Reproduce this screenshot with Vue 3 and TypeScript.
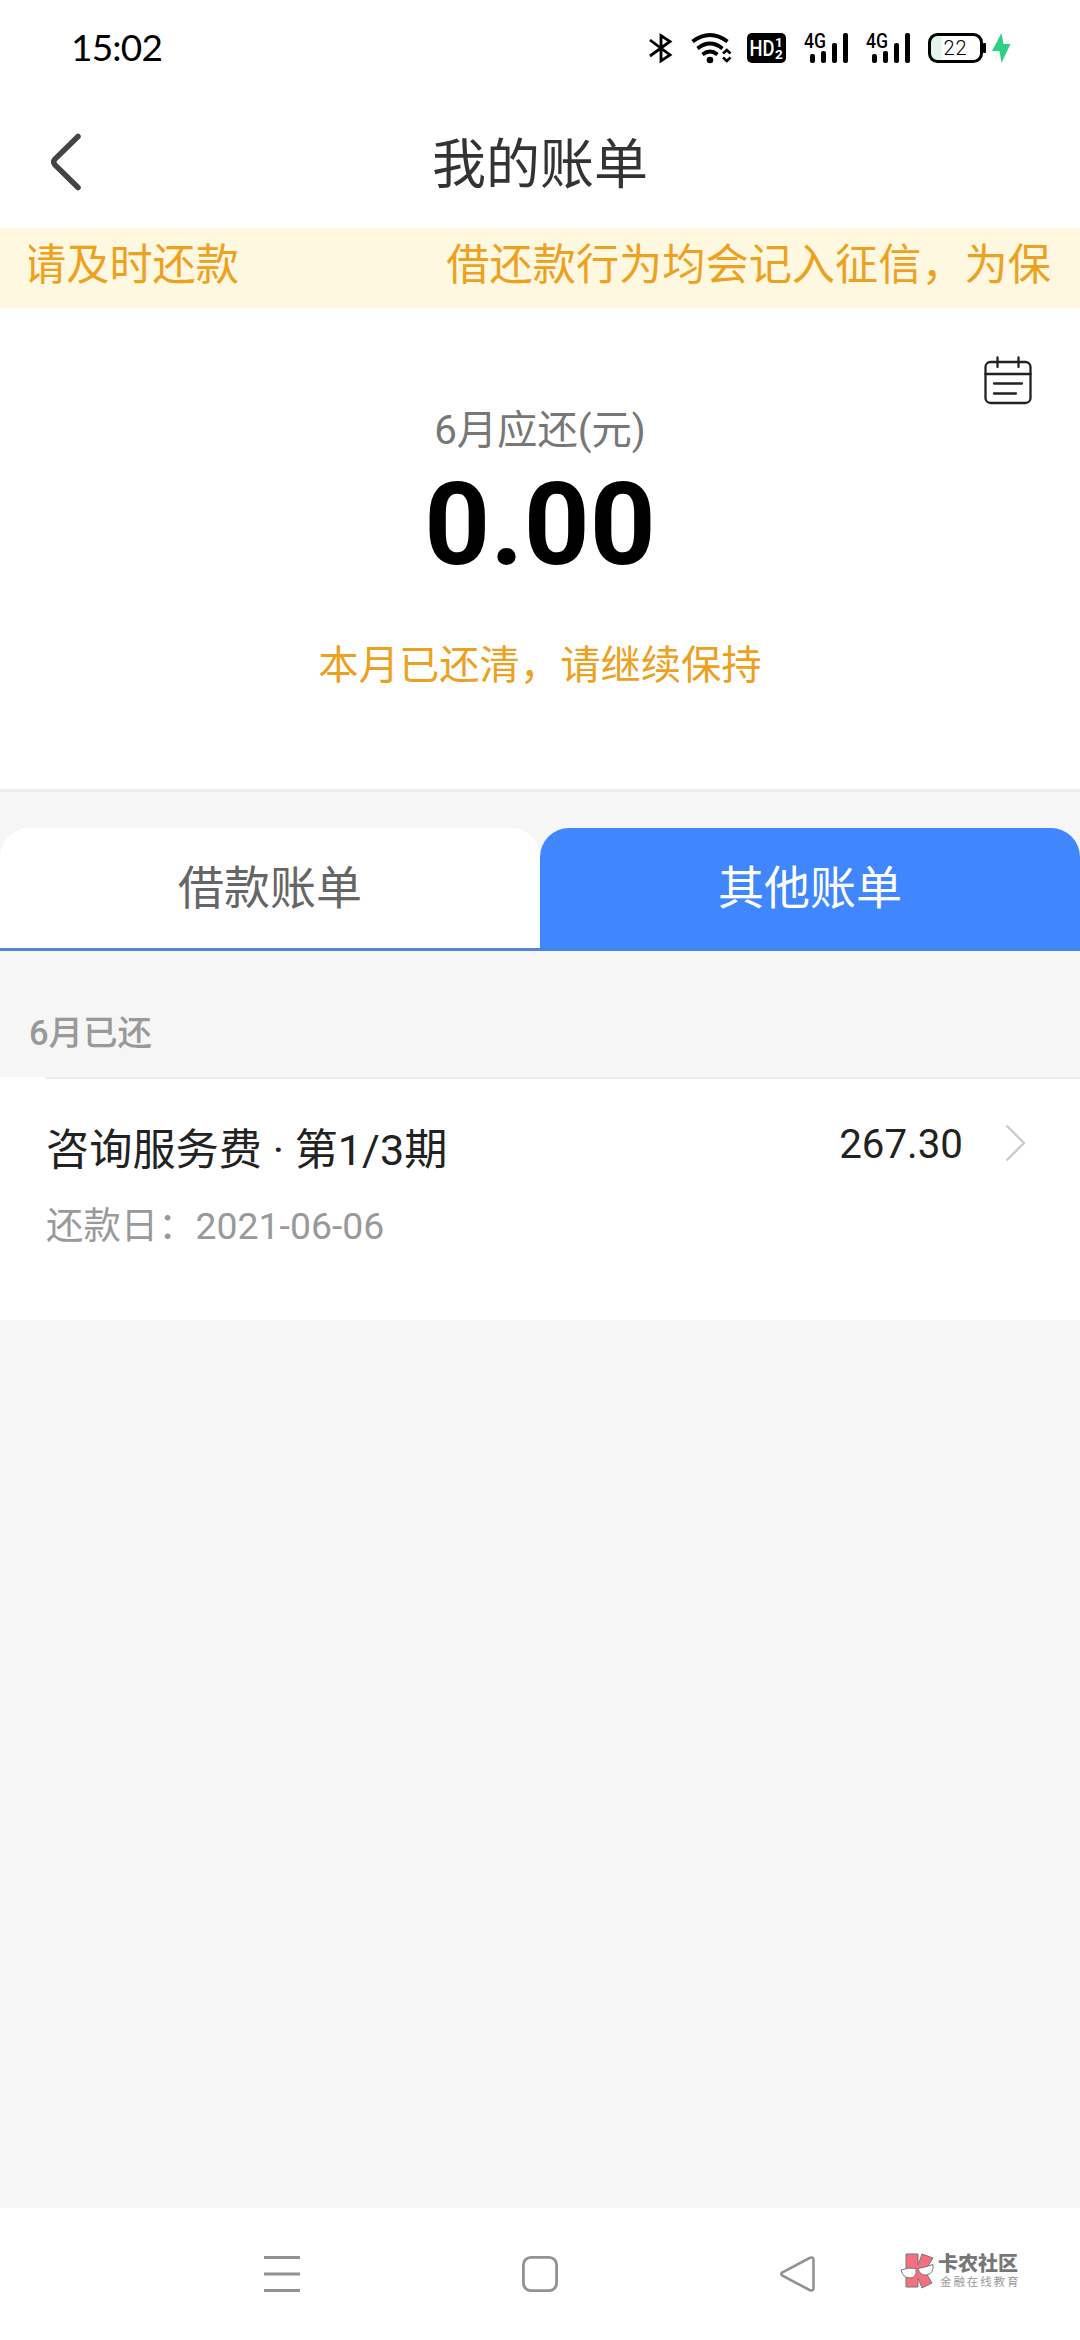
<script setup lang="ts">
interface Bill {
  name: string
  dueDate: string
  amount: string
}

const tabs: { label: string; active: boolean }[] = [
  { label: '借款账单', active: false },
  { label: '其他账单', active: true },
]

const bills: Bill[] = [
  { name: '咨询服务费 · 第1/3期', dueDate: '2021-06-06', amount: '267.30' },
]
</script>

<template>
  <div class="screen">
    <header class="status">
      <span class="clock">15:02</span>
      <svg class="status-icons" width="400" height="60" viewBox="0 0 400 60">
        <!-- bluetooth -->
        <path d="M20 20 40 35 31 41V15.500L40 21.500 20 36" fill="none" stroke="#000" stroke-width="2.800" />
        <!-- wifi -->
        <g fill="none" stroke="#000" stroke-width="3.700">
          <path d="M62.500 21.500Q80 8.500 97.500 21.500" />
          <path d="M67.500 28.500Q80 18.500 92.500 28.500" />
          <path d="M72.500 34.500Q80 28.500 87.500 34.500" />
          <path d="M93 33.500 96.800 30 100.500 33.500M93 37.500 96.800 41 100.500 37.500" stroke-width="2.600" />
        </g>
        <circle cx="80" cy="40" r="3.300" />
        <!-- HD -->
        <rect x="117" y="13" width="39" height="30" rx="5" />
        <g fill="#fff" font-family="Roboto, sans-serif" font-weight="700">
          <text x="119.500" y="36" font-size="22" font-weight="500" textLength="25" lengthAdjust="spacingAndGlyphs">HD</text>
          <text x="145" y="27" font-size="13.500">1</text>
          <text x="145" y="38.500" font-size="13.500">2</text>
        </g>
        <!-- signal, one per SIM -->
        <g v-for="x in [0, 62]" :key="x" :transform="`translate(${x} 0)`">
          <text x="174" y="27.500" font-size="20" font-weight="500" font-family="Roboto, sans-serif" textLength="22" lengthAdjust="spacingAndGlyphs">4G</text>
          <rect x="180" y="34" width="5" height="9" rx="2" />
          <rect x="191" y="31" width="5" height="12" rx="2" />
          <rect x="202" y="23" width="5" height="20" rx="2" />
          <rect x="213" y="13" width="5" height="30" rx="2" />
        </g>
        <!-- battery -->
        <rect x="300.500" y="15" width="11" height="26" rx="4" fill="#e3f6ec" />
        <rect x="299.500" y="14.500" width="52" height="27" rx="8" fill="none" stroke="#000" stroke-width="3" />
        <rect x="353" y="23" width="3" height="10" rx="1" />
        <text x="313.500" y="35" font-size="20" font-family="Roboto, sans-serif" font-weight="300" textLength="23">22</text>
        <path d="M371.500 13 362 31H369.500L371.500 43 380.500 24H373.500Z" fill="#2bd283" />
      </svg>
    </header>

    <nav class="navbar">
      <svg class="back" width="34" height="62" viewBox="0 0 34 62">
        <path d="M29 5.500 6 28Q3.500 31 6 34L29 56.500" fill="none" stroke="#444" stroke-width="5.500" stroke-linecap="round" />
      </svg>
      <h1 class="title">我的账单</h1>
    </nav>

    <div class="notice">
      <div class="marquee">
        <span>请及时还款</span>
        <span>借还款行为均会记入征信，为保</span>
      </div>
    </div>

    <section class="summary">
      <svg class="calendar" width="48" height="50" viewBox="0 0 48 50" fill="none" stroke="#222" stroke-width="2.300" stroke-linecap="round">
        <rect x="1.500" y="6" width="45" height="41" rx="5" />
        <path d="M1.500 18H46.500M13.500 1.500V11M34.500 1.500V11M10 27.500H38M10 37.500H32" />
      </svg>
      <p class="label">6月应还(元)</p>
      <p class="total">0.00</p>
      <p class="hint">本月已还清，请继续保持</p>
    </section>

    <div class="tabs">
      <div v-for="tab in tabs" :key="tab.label" class="tab" :class="{ active: tab.active }">{{ tab.label }}</div>
    </div>

    <h2 class="group">6月已还</h2>
    <ul class="bills">
      <li v-for="bill in bills" :key="bill.name" class="bill">
        <div class="info">
          <p class="name">{{ bill.name }}</p>
          <p class="due">还款日：{{ bill.dueDate }}</p>
        </div>
        <span class="amount">{{ bill.amount }}</span>
        <svg class="chevron" width="22" height="40" viewBox="0 0 22 40">
          <path d="M2.500 2.500 20 20 2.500 37.500" fill="none" stroke="#ccc" stroke-width="2.400" />
        </svg>
      </li>
    </ul>

    <footer class="system">
      <svg width="36" height="36" viewBox="0 0 36 36"><path d="M0 1.500H36M0 18H36M0 34.500H36" stroke="#929292" stroke-width="3" /></svg>
      <svg width="36" height="36" viewBox="0 0 36 36"><rect x="1.400" y="1.400" width="33.200" height="33.200" rx="7.500" fill="none" stroke="#929292" stroke-width="2.800" /></svg>
      <svg width="36" height="36" viewBox="0 0 36 36"><path d="M2.500 16.300 29.500 2Q33.500 .5 33.500 4V32Q33.500 35.500 29.500 34L2.500 19.700Q0 18 2.500 16.300Z" fill="none" stroke="#929292" stroke-width="2.600" /></svg>
      <div class="brand">
        <svg width="34" height="36" viewBox="0 0 34 36" stroke="#777" stroke-width="1">
          <path d="M6 1H18V12L22 1 33 5 25 18 32 30 22 35 18 25V34H6Z" fill="#f5707f" />
          <path d="M1 17Q8 14 16 15.500 17 25 10 25 3 25 1 17ZM18 15.500Q26 14 33 11.500 34 20 27 22 20 23 18 15.500Z" fill="#fff" />
        </svg>
        <div class="brand-text">
          <span class="brand-name">卡农社区</span>
          <span class="brand-sub">金融在线教育</span>
        </div>
      </div>
    </footer>
  </div>
</template>

<style>
body {
  margin: 0;
  background: #f6f6f6;
}
</style>

<style scoped>
.screen {
  display: flex;
  flex-direction: column;
  width: 1080px;
  height: 2340px;
  overflow: hidden;
  background: #f6f6f6;
  font-family: Roboto, "Noto Sans CJK SC", sans-serif;
}
h1, h2, p, ul {
  margin: 0;
  padding: 0;
  font-weight: 400;
}
.status {
  display: flex;
  justify-content: space-between;
  height: 96px;
  box-sizing: border-box;
  padding: 20px 50px 0 71px;
  background: #fff;
}
.clock {
  font: 37px/54px Lato, sans-serif;
  letter-spacing: -0.8px;
  color: #000;
}
.navbar {
  display: grid;
  grid-template-columns: 180px 1fr 180px;
  align-items: center;
  height: 132px;
  background: #fff;
}
.back {
  margin-left: 49px;
}
.title {
  padding-top: 7px;
  text-align: center;
  font-size: 54px;
  line-height: 80px;
  color: #333;
}
.notice {
  height: 80px;
  padding: 0 29px;
  background: #fff8e1;
}
.marquee {
  display: flex;
  justify-content: space-between;
  overflow: hidden;
  font-size: 43.2px;
  line-height: 76px;
  white-space: nowrap;
  color: #eda120;
}
.marquee span:first-child {
  margin-left: -6px;
}
.summary {
  display: flex;
  flex-direction: column;
  align-items: center;
  height: 484px;
  box-sizing: border-box;
  padding-top: 48px;
  border-bottom: 3px solid #ececec;
  background: #fff;
  text-align: center;
}
.calendar {
  align-self: flex-end;
  margin-right: 48px;
}
.label {
  margin-top: -5px;
  font-size: 40.300px;
  line-height: 60px;
  color: #777;
}
.total {
  margin-top: -4px;
  font-size: 115px;
  font-weight: 700;
  line-height: 136px;
  height: 136px;
  color: #000;
}
.hint {
  margin-top: 43px;
  font-size: 40.300px;
  line-height: 60px;
  color: #eda120;
}
.tabs {
  display: flex;
  margin-top: 36px;
}
.tab {
  flex: 1;
  height: 120px;
  border-bottom: 3px solid #5585d5;
  border-radius: 29px 29px 0 0;
  background: #fff;
  text-align: center;
  font-size: 46px;
  line-height: 120px;
  color: #666;
}
.tab.active {
  border-bottom-color: #4184ee;
  background: #4086ff;
  color: #fff;
}
.group {
  height: 126px;
  box-sizing: border-box;
  padding: 57px 0 0 29px;
  font-size: 34.500px;
  font-weight: 500;
  line-height: 50px;
  color: #999;
}
.bills {
  list-style: none;
}
.bill {
  display: flex;
  align-items: flex-start;
  height: 243px;
  box-sizing: border-box;
  padding: 0 54px 0 46px;
  background: linear-gradient(#ececec, #ececec) 45px 0 / 100% 2px no-repeat #fff;
}
.info {
  flex: 1;
  padding-top: 42px;
}
.name {
  font-size: 43.200px;
  line-height: 64px;
  color: #222;
}
.due {
  margin-top: 15px;
  font-size: 37.400px;
  line-height: 56px;
  color: #999;
}
.amount {
  margin-top: 43px;
  font-size: 40.300px;
  line-height: 50px;
  color: #222;
}
.chevron {
  margin: 46px 0 0 41px;
}
.system {
  position: relative;
  display: flex;
  justify-content: center;
  gap: 222px;
  height: 132px;
  box-sizing: border-box;
  padding-top: 48px;
  margin-top: auto;
  background: #fff;
}
.brand {
  position: absolute;
  left: 900px;
  top: 45px;
  display: flex;
  gap: 4px;
}
.brand-text {
  display: flex;
  flex-direction: column;
  padding-top: 1px;
  white-space: nowrap;
}
.brand-name {
  font-size: 20px;
  font-weight: 900;
  line-height: 21px;
  color: #777;
}
.brand-sub {
  margin-left: 2px;
  font-size: 11.500px;
  letter-spacing: 1.900px;
  line-height: 14px;
  color: #999;
}
</style>
